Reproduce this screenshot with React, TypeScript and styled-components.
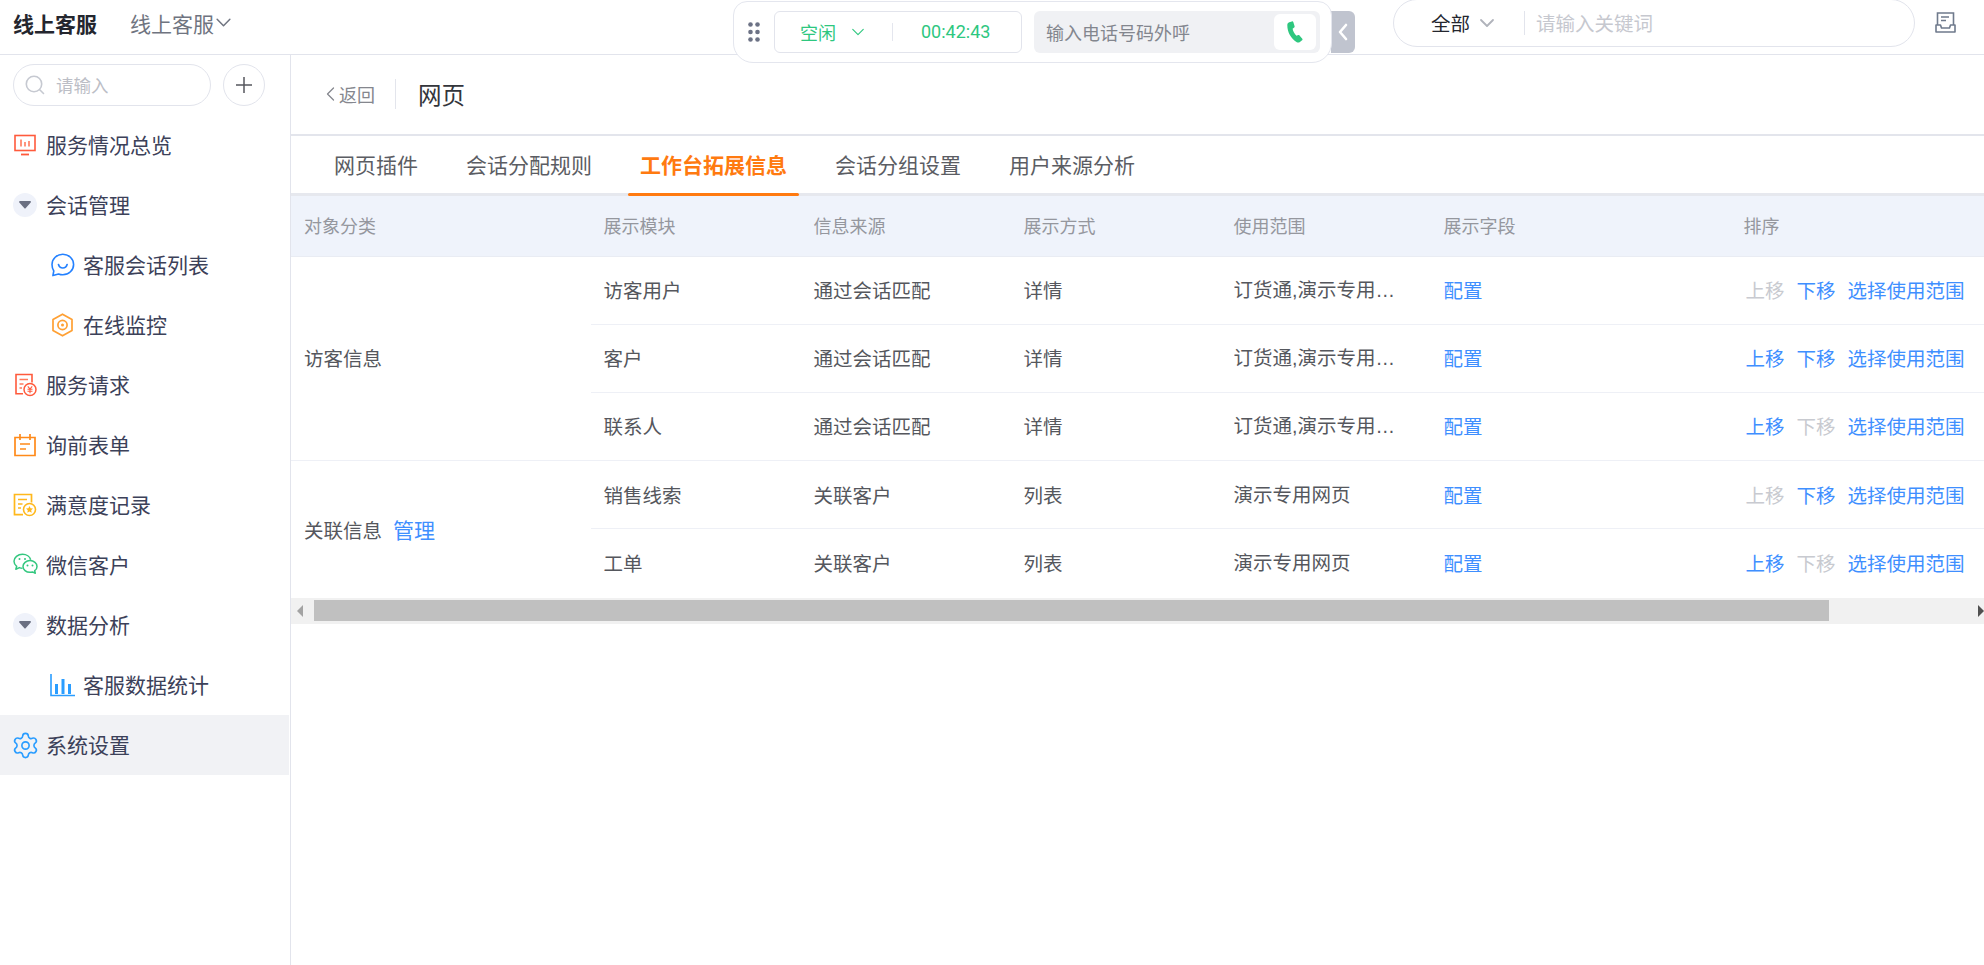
import React from "react";
import styled, { createGlobalStyle } from "styled-components";
import { Settings } from "lucide-react";

const Global = createGlobalStyle`
  html, body { margin: 0; padding: 0; background: #fff; }
  body { font-family: "Noto Sans CJK SC", "Liberation Sans", sans-serif; }
  * { box-sizing: border-box; }
`;

const Page = styled.div`
  width: 1984px; height: 965px; overflow: hidden; display: flex; flex-direction: column; background: #fff;
`;

const TopBar = styled.header`
  position: relative; flex: none; height: 55px; border-bottom: 1px solid #e2e4ec;
  display: flex; align-items: center; padding: 0 28px 9px 13px;
`;
const Brand = styled.div`font-size: 21px; font-weight: 700; color: #24262e; line-height: 30px; width: 117px;`;
const Switcher = styled.div`font-size: 21px; color: #6f7480; line-height: 30px; display: flex; align-items: center; gap: 1px;`;
const GlobalSearch = styled.div`
  margin-left: auto; width: 522px; height: 48px; border: 1px solid #e2e4ec; border-radius: 24px;
  display: flex; align-items: center; padding-left: 37px; background: #fff;
`;
const ScopeLabel = styled.span`font-size: 19.5px; color: #24262e; line-height: 28px; margin-right: 9px;`;
const Divider = styled.i`display: block; width: 1px; height: 24px; background: #e2e4ec; margin: 0 11px 0 29px;`;
const GlobalPlaceholder = styled.span`font-size: 19.5px; color: #c6c8cf; line-height: 28px;`;
const Inbox = styled.svg`margin-left: 20px; flex: none;`;

const Phone = styled.div`
  position: absolute; left: 733px; top: 1px; width: 599px; height: 62px; z-index: 3;
  background: #fff; border: 1px solid #e4e6ee; border-radius: 14px 14px 20px 20px;
  display: flex; align-items: center; padding-left: 14px;
`;
const Dots = styled.svg`flex: none;`;
const StatusBox = styled.div`
  margin-left: 14px; width: 248px; height: 42px; border: 1px solid #e2e4ec; border-radius: 6px;
  display: flex; align-items: center; padding-left: 25px; color: #2ec77f;
`;
const StatusText = styled.span`font-size: 18px; line-height: 24px; margin-right: 15px;`;
const StatusSep = styled.i`display: block; width: 1px; height: 18px; background: #e4e6ee; margin: 0 28px 0 27px;`;
const Timer = styled.span`font-family: "Roboto", sans-serif; font-size: 18px; line-height: 24px;`;
const DialBox = styled.div`
  margin-left: 12px; width: 286px; height: 42px; background: #f0f1f4; border-radius: 6px;
  display: flex; align-items: center; justify-content: space-between; padding: 0 4px 0 12px;
`;
const DialPlaceholder = styled.span`font-size: 18px; color: #83868e; line-height: 24px;`;
const DialButton = styled.div`
  width: 42px; height: 36px; background: #fff; border-radius: 6px; display: flex; align-items: center; justify-content: center;
`;
const Collapse = styled.div`
  position: absolute; left: 1331px; top: 11px; width: 24px; height: 42px; z-index: 2; background: #c0c4cf;
  border-radius: 0 6px 6px 0; display: flex; align-items: center; justify-content: center;
`;

const Body = styled.div`flex: 1; display: flex; min-height: 0;`;

const Side = styled.aside`
  flex: none; width: 291px; border-right: 1px solid #e2e4ec; padding-top: 9px; padding-right: 1px;
`;
const SideTools = styled.div`display: flex; align-items: center; padding-left: 13px; gap: 12px; margin-bottom: 9px;`;
const SideSearch = styled.div`
  width: 198px; height: 42px; border: 1px solid #e2e4ec; border-radius: 21px; display: flex; align-items: center; padding-left: 11px; gap: 11px;
`;
const SidePlaceholder = styled.span`font-size: 17.5px; color: #bcbec6; line-height: 24px; margin-top: -1px;`;
const PlusButton = styled.div`
  width: 42px; height: 42px; border: 1px solid #e2e4ec; border-radius: 50%; display: flex; align-items: center; justify-content: center;
`;
const MenuRow = styled.div<{ $sub?: boolean; $active?: boolean }>`
  height: 60px; display: flex; align-items: center; font-size: 21px; color: #3c4159;
  padding-left: ${(p) => (p.$sub ? "50px" : "13px")};
  background: ${(p) => (p.$active ? "#f1f2f5" : "transparent")};
`;
const MenuLabel = styled.span`line-height: 30px; margin-top: -2px;`;
const MenuIcon = styled.span`
  flex: none; width: 24px; height: 24px; display: flex; align-items: center; justify-content: center;
  margin-right: 9px;
  & > svg { flex: none; }
`;
const Caret = styled.span`
  flex: none; width: 24px; height: 24px; border-radius: 50%; background: #eff2fa; display: flex; align-items: center; justify-content: center; margin-right: 9px;
`;

const Main = styled.main`flex: 1; min-width: 0;`;
const PageHead = styled.div`
  height: 81px; border-bottom: 2px solid #e3e5ec; display: flex; align-items: center; padding: 0 0 2px 35px;
`;
const Back = styled.div`display: flex; align-items: center; gap: 4px; font-size: 18px; color: #85878e; line-height: 24px;`;
const HeadSep = styled.i`display: block; width: 1px; height: 30px; background: #e3e5ec; margin: 0 22px 0 20px;`;
const Title = styled.h1`margin: 0; font-size: 23.5px; font-weight: 400; color: #33353b; line-height: 32px;`;

const Tabs = styled.nav`
  height: 60px; display: flex; gap: 24px; padding-left: 31px; border-bottom: 3px solid #e6e8ee;
`;
const Tab = styled.div<{ $active?: boolean }>`
  position: relative; height: 60px; padding: 0 12px; line-height: 56px; font-size: 21px;
  font-weight: ${(p) => (p.$active ? 700 : 400)};
  color: ${(p) => (p.$active ? "#ff7a10" : "#5b5d63")};
  ${(p) => p.$active && `
    &::after { content: ""; position: absolute; left: 0; right: 0; bottom: 0; height: 3px; background: #ff7a10; border-radius: 2px; }
  `}
`;

const Table = styled.table`
  width: 1693px; table-layout: fixed; border-collapse: collapse;
`;
const Th = styled.th`
  height: 60px; padding: 0 0 2px 13px; background: #eff3fb; border-bottom: 1px solid #e9ecf3;
  text-align: left; font-size: 18px; font-weight: 400; color: #95979e;
`;
const Td = styled.td<{ $last?: boolean }>`
  height: 68.2px; padding: 0 0 0 13px; font-size: 19.5px; line-height: 26px; color: #55575d; white-space: nowrap;
  border-bottom: ${(p) => (p.$last ? "0" : "1px solid #eef0f6")};
`;
const Clip = styled.span`
  display: block; width: 164px; overflow: hidden; text-overflow: ellipsis; white-space: nowrap;
  font-family: "Liberation Sans", "Noto Sans CJK SC", sans-serif;
`;
const Link = styled.a<{ $big?: boolean; $off?: boolean }>`
  color: ${(p) => (p.$off ? "#c8cad0" : "#3f8fff")};
  font-size: ${(p) => (p.$big ? "21px" : "19.5px")};
  text-decoration: none;
`;
const Actions = styled.div`display: flex; gap: 12px; padding-left: 2px;`;
const GroupManage = styled(Link)`margin-left: 11px;`;

const ScrollTrack = styled.div`
  height: 26px; background: #f1f1f1; margin-top: 1px; display: flex; align-items: center;
`;
const ScrollEnd = styled.div`
  flex: none; width: 23px; height: 21px; display: flex; align-items: center; justify-content: center; padding-right: 5px;
`;
const ScrollThumb = styled.div`flex: none; width: 1515px; height: 21px; background: #c0c0c0;`;
const ScrollRest = styled.div`flex: 1;`;
const ScrollEndRight = styled.div`
  flex: none; width: 6px; height: 21px; display: flex; align-items: center; justify-content: flex-end;
`;
const ArrowLeft = styled.i`
  display: block; width: 0; height: 0; border-style: solid; border-width: 6px 6px 6px 0; border-color: transparent #a3a3a3 transparent transparent;
`;
const ArrowRight = styled.i`
  display: block; width: 0; height: 0; border-style: solid; border-width: 6px 0 6px 6px; border-color: transparent transparent transparent #505050;
`;

const Chevron = ({ size = 16, color = "#6f7480", w = 1.4 }: { size?: number; color?: string; w?: number }) => (
  <svg width={size} height={size} viewBox="0 0 16 16" fill="none">
    <path d="M2 5l6 6 6-6" stroke={color} strokeWidth={w} strokeLinecap="round" strokeLinejoin="round" />
  </svg>
);

const MonitorIcon = () => (
  <svg width="22" height="22" viewBox="0 0 22 22" fill="none">
    <rect x="1" y="1.500" width="20" height="15" stroke="#ff5a3c" strokeWidth="1.600" />
    <path d="M7 20.500h8" stroke="#ff5a3c" strokeWidth="1.800" />
    <path d="M7 5.500v7M11 8v4.500M15 7v5.500" stroke="#ff7a5c" strokeWidth="1.600" />
  </svg>
);
const ChatIcon = () => (
  <svg width="25" height="24" viewBox="0 0 25 24" fill="none">
    <path d="M12.800 1.200c6 0 10.800 4.600 10.800 10.300s-4.800 10.300-10.800 10.300c-1.500 0-3-.3-4.200-.8l-5.700 1.600.9-4.600C2.700 16.300 2 14 2 11.500 2 5.800 6.800 1.200 12.800 1.200z" stroke="#2481ff" strokeWidth="1.600" strokeLinejoin="round" />
    <path d="M8.500 11.500c.6 2.200 2.300 3.500 4.300 3.500s3.700-1.300 4.300-3.500" stroke="#2481ff" strokeWidth="1.700" strokeLinecap="round" />
  </svg>
);
const HexIcon = () => (
  <svg width="23" height="24" viewBox="0 0 23 24" fill="none">
    <path d="M11.500 1.200l9.500 5.400v10.800l-9.500 5.400L2 17.400V6.600z" stroke="#ffa033" strokeWidth="1.700" strokeLinejoin="round" />
    <circle cx="11.500" cy="12" r="4.600" stroke="#ffa033" strokeWidth="1.700" />
    <circle cx="11.500" cy="12" r="1.500" fill="#ffa033" />
  </svg>
);
const RequestIcon = () => (
  <svg width="24" height="24" viewBox="0 0 24 24" fill="none">
    <path d="M10 20.700H3V1.500h16v8" stroke="#ff5a3c" strokeWidth="1.600" />
    <path d="M6.500 6.500h8.500M6.500 11h4M6.500 15h2.500" stroke="#ff7a5c" strokeWidth="1.500" />
    <circle cx="17" cy="16.500" r="6" stroke="#ff5a3c" strokeWidth="1.500" />
    <path d="M14.800 13.300l2.200 2.700 2.200-2.700M14.500 16.300h5M14.500 18.300h5M17 16v4.300" stroke="#ff5a3c" strokeWidth="1.100" />
  </svg>
);
const CalendarIcon = () => (
  <svg width="22" height="24" viewBox="0 0 22 24" fill="none">
    <path d="M1 4.500h20v18H1z" stroke="#ff8a1a" strokeWidth="1.700" />
    <path d="M6 1v6M16 1v6" stroke="#ff8a1a" strokeWidth="1.700" />
    <path d="M6 11h10M6 16h6" stroke="#ff8a1a" strokeWidth="1.700" />
  </svg>
);
const StarDocIcon = () => (
  <svg width="24" height="24" viewBox="0 0 24 24" fill="none">
    <path d="M10 21.700H1.500V1.500h17v8" stroke="#ffb81c" strokeWidth="1.700" />
    <path d="M5 6.500h9M5 11h4.500M5 15h3" stroke="#ffb81c" strokeWidth="1.500" />
    <circle cx="16.500" cy="16.500" r="6" stroke="#ffb81c" strokeWidth="1.600" />
    <path d="M16.500 13l1.100 2.300 2.400.3-1.800 1.700.5 2.500-2.200-1.200-2.200 1.200.5-2.500-1.800-1.700 2.400-.3z" fill="#ffb81c" />
  </svg>
);
const WechatIcon = () => (
  <svg width="25" height="24" viewBox="0 0 25 24" fill="none">
    <path d="M9.500 15.200c-1.100 0-2.200-.2-3.100-.6L2.800 16.300l.9-3C2 12 1 10.200 1 8.200 1 4.400 4.800 1.300 9.500 1.300c4 0 7.400 2.300 8.200 5.400" stroke="#33c77f" strokeWidth="1.500" strokeLinejoin="round" />
    <path d="M17 7.600c3.900 0 7 2.600 7 5.800 0 1.700-.9 3.300-2.300 4.300l.6 2.500-2.800-1.300c-.8.200-1.600.4-2.500.4-3.900 0-7-2.600-7-5.800s3.100-5.900 7-5.900z" stroke="#33c77f" strokeWidth="1.500" strokeLinejoin="round" />
    <circle cx="6.500" cy="6" r="1" fill="#33c77f" /><circle cx="12" cy="6" r="1" fill="#33c77f" />
    <circle cx="14.500" cy="12.500" r="1" fill="#33c77f" /><circle cx="19.500" cy="12.500" r="1" fill="#33c77f" />
  </svg>
);
const BarsIcon = () => (
  <svg width="25" height="24" viewBox="0 0 25 24" fill="none">
    <path d="M1 1v21.500h24" stroke="#2a9dff" strokeWidth="1.600" />
    <path d="M6.500 11v10M13 6v15M19.500 11v10" stroke="#2a9dff" strokeWidth="3" />
  </svg>
);

const rows = [
  { mod: "访客用户", src: "通过会话匹配", how: "详情", scope: "订货通,演示专用网页", up: false, down: true },
  { mod: "客户", src: "通过会话匹配", how: "详情", scope: "订货通,演示专用网页", up: true, down: true },
  { mod: "联系人", src: "通过会话匹配", how: "详情", scope: "订货通,演示专用网页", up: true, down: false },
  { mod: "销售线索", src: "关联客户", how: "列表", scope: "演示专用网页", up: false, down: true },
  { mod: "工单", src: "关联客户", how: "列表", scope: "演示专用网页", up: true, down: false },
];

const MENU: { label: string; icon?: React.ReactNode; sub?: boolean; caret?: boolean; active?: boolean }[] = [
  { label: "服务情况总览", icon: <MonitorIcon /> },
  { label: "会话管理", caret: true },
  { label: "客服会话列表", icon: <ChatIcon />, sub: true },
  { label: "在线监控", icon: <HexIcon />, sub: true },
  { label: "服务请求", icon: <RequestIcon /> },
  { label: "询前表单", icon: <CalendarIcon /> },
  { label: "满意度记录", icon: <StarDocIcon /> },
  { label: "微信客户", icon: <WechatIcon /> },
  { label: "数据分析", caret: true },
  { label: "客服数据统计", icon: <BarsIcon />, sub: true },
  { label: "系统设置", icon: <Settings size={29} color="#2a9dff" strokeWidth={1.35} />, active: true },
];

export default function App() {
  return (
    <Page>
      <Global />
      <TopBar>
        <Brand>线上客服</Brand>
        <Switcher>线上客服<Chevron size={17} /></Switcher>
        <Phone>
          <Dots width="12" height="20" viewBox="0 0 12 20" fill="#6c7285">
            {[2.5, 10, 17.5].map((y) => (
              <React.Fragment key={y}>
                <circle cx="2.500" cy={y} r="2.300" />
                <circle cx="9.500" cy={y} r="2.300" />
              </React.Fragment>
            ))}
          </Dots>
          <StatusBox>
            <StatusText>空闲</StatusText>
            <Chevron size={14} color="#2ec77f" w={1.3} />
            <StatusSep />
            <Timer>00:42:43</Timer>
          </StatusBox>
          <DialBox>
            <DialPlaceholder>输入电话号码外呼</DialPlaceholder>
            <DialButton>
              <svg width="18" height="22" viewBox="0 0 18 22">
                <path d="M3.200 1.200L5.900.4c.6-.2 1.200.1 1.400.7l1.300 4.100c.2.500 0 1-.4 1.300L6.600 7.700c.5 2.600 1.900 5.200 3.900 7.100l1.700-.7c.5-.2 1-.1 1.300.3l2.800 3.300c.4.500.3 1.200-.2 1.500l-2.200 1.800c-.9.700-2.100.8-3.100.2C5 17.700 1.300 11.300 1.300 4.100c0-1.300.7-2.500 1.900-2.900z" fill="#2ec77f" />
              </svg>
            </DialButton>
          </DialBox>
        </Phone>
        <Collapse>
          <svg width="10" height="18" viewBox="0 0 10 18" fill="none"><path d="M8 2L2 9l6 7" stroke="#fff" strokeWidth="2.600" strokeLinecap="round" strokeLinejoin="round" /></svg>
        </Collapse>
        <GlobalSearch>
          <ScopeLabel>全部</ScopeLabel>
          <Chevron size={16} color="#b0b3bb" w={1.8} />
          <Divider />
          <GlobalPlaceholder>请输入关键词</GlobalPlaceholder>
        </GlobalSearch>
        <Inbox width="21" height="21" viewBox="0 0 21 21" fill="none">
          <path d="M2.500 13V1h16v12" stroke="#6f7a8c" strokeWidth="1.600" />
          <path d="M6 5h8M6 8.500h5" stroke="#6f7a8c" strokeWidth="1.500" />
          <path d="M1 13h4.500l1 3h8l1-3H20v7H1z" stroke="#6f7a8c" strokeWidth="1.600" strokeLinejoin="round" />
        </Inbox>
      </TopBar>
      <Body>
        <Side>
          <SideTools>
            <SideSearch>
              <svg width="20" height="20" viewBox="0 0 20 20" fill="none">
                <circle cx="9" cy="9" r="7.700" stroke="#c6c9d1" strokeWidth="1.600" />
                <path d="M15 15l3.500 3.500" stroke="#c6c9d1" strokeWidth="1.600" strokeLinecap="round" />
              </svg>
              <SidePlaceholder>请输入</SidePlaceholder>
            </SideSearch>
            <PlusButton>
              <svg width="18" height="18" viewBox="0 0 18 18"><path d="M9 1v16M1 9h16" stroke="#55575d" strokeWidth="1.500" /></svg>
            </PlusButton>
          </SideTools>
          {MENU.map((m) => (
            <MenuRow key={m.label} $sub={m.sub} $active={m.active}>
              {m.caret ? (
                <Caret><svg width="12" height="8" viewBox="0 0 12 8"><path d="M1 0h10c.8 0 1.200.9.700 1.500L6.600 7.200c-.3.4-.9.4-1.200 0L.3 1.500C-.2.9.2 0 1 0z" fill="#6b7082" /></svg></Caret>
              ) : (
                <MenuIcon>{m.icon}</MenuIcon>
              )}
              <MenuLabel>{m.label}</MenuLabel>
            </MenuRow>
          ))}
        </Side>
        <Main>
          <PageHead>
            <Back><svg width="9" height="16" viewBox="0 0 9 16" fill="none"><path d="M7.500 2L1.500 8l6 6" stroke="#85878e" strokeWidth="1.300" strokeLinecap="round" strokeLinejoin="round" /></svg>返回</Back>
            <HeadSep />
            <Title>网页</Title>
          </PageHead>
          <Tabs>
            <Tab>网页插件</Tab>
            <Tab>会话分配规则</Tab>
            <Tab $active>工作台拓展信息</Tab>
            <Tab>会话分组设置</Tab>
            <Tab>用户来源分析</Tab>
          </Tabs>
          <Table>
            <colgroup>
              <col style={{ width: 299.5 }} />
              <col style={{ width: 210 }} />
              <col style={{ width: 210 }} />
              <col style={{ width: 210 }} />
              <col style={{ width: 210 }} />
              <col style={{ width: 300 }} />
              <col style={{ width: 253.5 }} />
            </colgroup>
            <thead>
              <tr>
                <Th>对象分类</Th><Th>展示模块</Th><Th>信息来源</Th><Th>展示方式</Th><Th>使用范围</Th><Th>展示字段</Th><Th>排序</Th>
              </tr>
            </thead>
            <tbody>
              {rows.map((r, i) => (
                <tr key={r.mod}>
                  {i === 0 && <Td rowSpan={3}>访客信息</Td>}
                  {i === 3 && <Td rowSpan={2} $last>关联信息<GroupManage href="#" $big>管理</GroupManage></Td>}
                  <Td $last={i === 4}>{r.mod}</Td>
                  <Td $last={i === 4}>{r.src}</Td>
                  <Td $last={i === 4}>{r.how}</Td>
                  <Td $last={i === 4}><Clip>{r.scope}</Clip></Td>
                  <Td $last={i === 4}><Link href="#">配置</Link></Td>
                  <Td $last={i === 4}>
                    <Actions>
                      <Link href="#" $off={!r.up}>上移</Link>
                      <Link href="#" $off={!r.down}>下移</Link>
                      <Link href="#">选择使用范围</Link>
                    </Actions>
                  </Td>
                </tr>
              ))}
            </tbody>
          </Table>
          <ScrollTrack>
            <ScrollEnd><ArrowLeft /></ScrollEnd>
            <ScrollThumb />
            <ScrollRest />
            <ScrollEndRight><ArrowRight /></ScrollEndRight>
          </ScrollTrack>
        </Main>
      </Body>
    </Page>
  );
}
